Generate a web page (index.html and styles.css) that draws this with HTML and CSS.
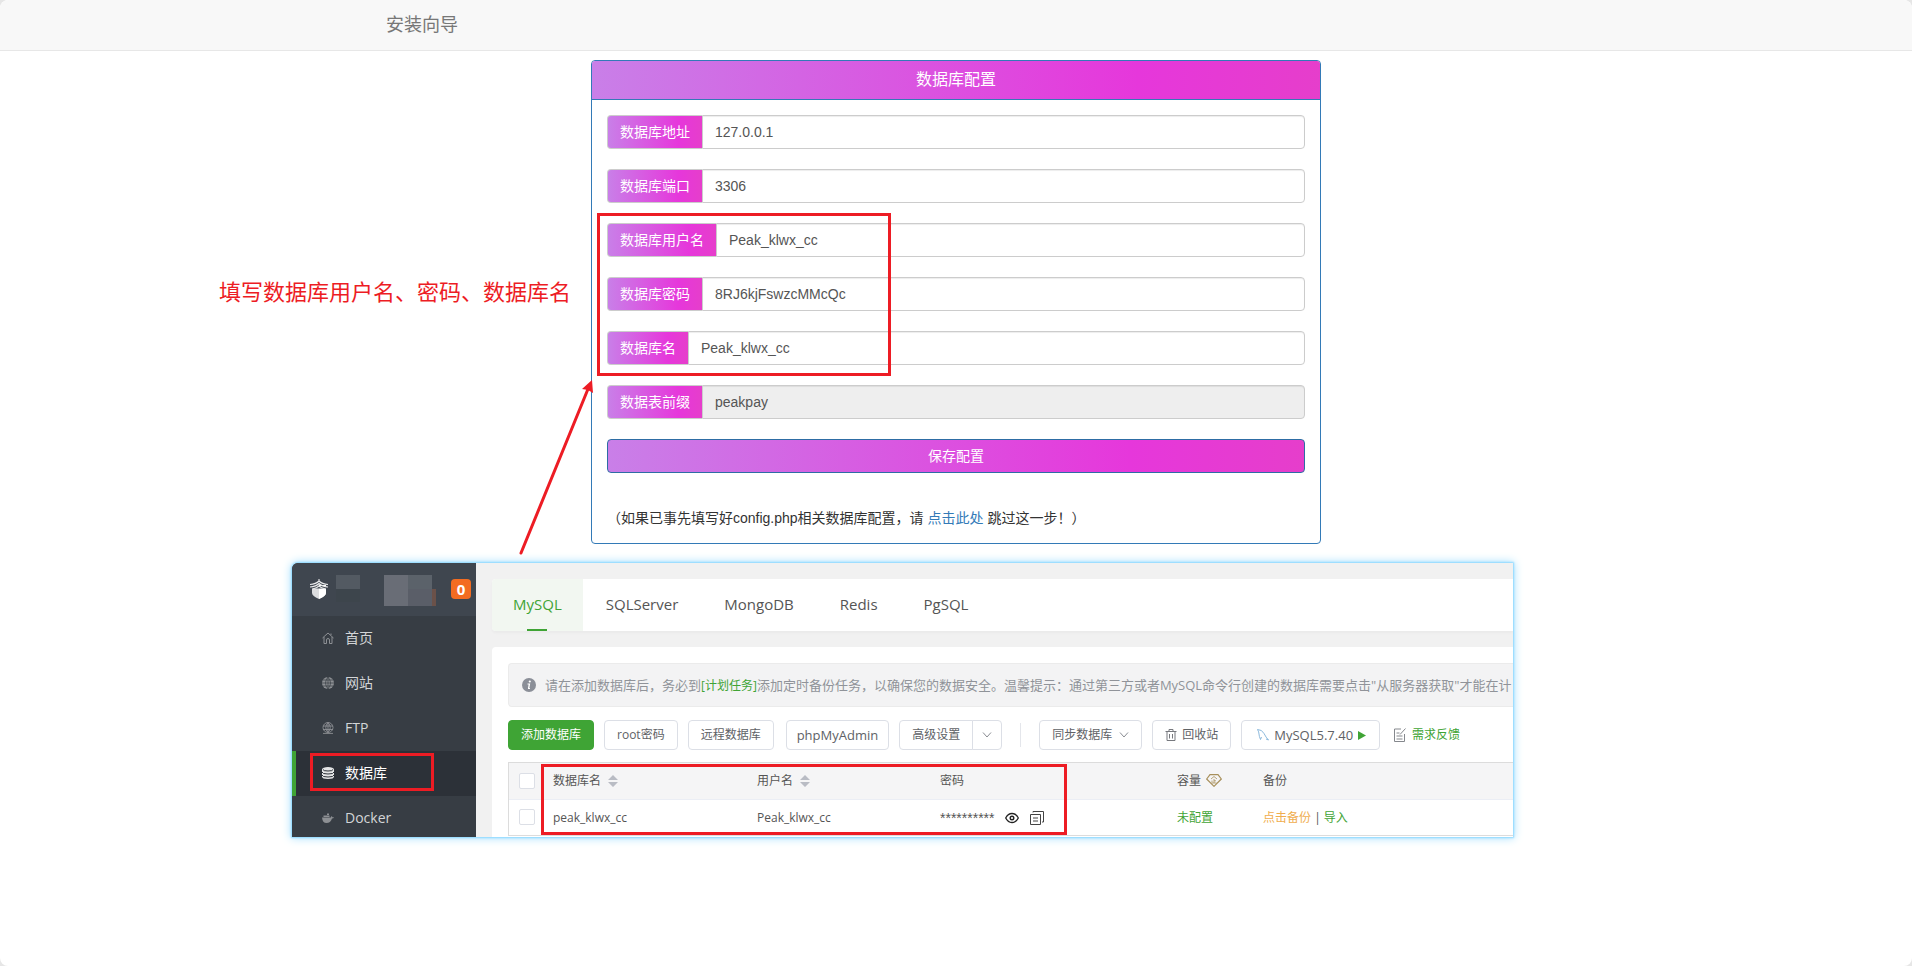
FILE: index.html
```html
<!DOCTYPE html>
<html lang="zh-CN">
<head>
<meta charset="utf-8">
<title>安装向导</title>
<link rel="stylesheet" href="styles.css">
</head>
<body>
<svg class="defs" aria-hidden="true">
  <symbol id="sort" viewBox="0 0 10 12"><path d="M5 0l5 5H0zM5 12L0 7h10z" fill="#b9bcc4"/></symbol>
  <symbol id="chev" viewBox="0 0 10 6"><path d="M1 .5l4 4.500 4-4.500" fill="none" stroke="#8a8d93"/></symbol>
</svg>
<nav class="navbar"><span class="brand">安装向导</span></nav>
<main>
  <div class="guide">
    <form class="panel">
      <h1 class="panel-title">数据库配置</h1>
      <div class="panel-body">
        <div class="group"><label for="host">数据库地址</label><input id="host" value="127.0.0.1"></div>
        <div class="group"><label for="port">数据库端口</label><input id="port" value="3306"></div>
        <div class="group"><label for="user">数据库用户名</label><input id="user" value="Peak_klwx_cc"></div>
        <div class="group"><label for="pwd">数据库密码</label><input id="pwd" value="8RJ6kjFswzcMMcQc"></div>
        <div class="group"><label for="name">数据库名</label><input id="name" value="Peak_klwx_cc"></div>
        <div class="group"><label for="prefix">数据表前缀</label><input id="prefix" value="peakpay" disabled></div>
        <button type="button" class="save">保存配置</button>
        <p class="skip">（如果已事先填写好config.php相关数据库配置，请 <a href="#">点击此处</a> 跳过这一步！）</p>
      </div>
    </form>
    <p class="note">填写数据库用户名、密码、数据库名</p>
    <span class="mark mark-form"></span>
    <svg class="arrow" width="80" height="180" viewBox="0 0 80 180" aria-hidden="true">
      <path d="M6 173L73 9" stroke="#ed1c24" stroke-width="3" stroke-linecap="round"/>
      <path d="M77 0L78 13L73 10L67 9z" fill="#ed1c24"/>
    </svg>
  </div>

  <section class="console">
    <aside class="side">
      <div class="side-head">
        <svg class="logo" width="20" height="20" viewBox="0 0 20 20"><path d="M3 7v7q0 3 7 6 7-3 7-6V7z" fill="#dcdddf"/><path d="M10 6h7v8q0 3-7 6z" fill="#fff"/><path d="M3 10V7h14v3l-1-1-1 1-1-1-1 1-1-1-1 1-1-1-1 1-1-1-1 1-1-1-1 1-1-1z" fill="#3f464f"/><path d="M1 5.500Q7 5 10 2q3 3 9 3.500M1 8Q7 7.500 10 4.500q3 3 9 3.500M3.500 10Q8 9 10 7q2 2 6.500 3M10 0v3" fill="none" stroke="#e9eaeb" stroke-width="1.100"/></svg>
        <svg class="mosaic" width="100" height="32" viewBox="0 0 100 32" aria-hidden="true"><path d="M0 1h24v14H0z" fill="#535a62"/><path d="M0 15h24v13H0z" fill="#3d454c"/><path d="M48 1h24v31H48z" fill="#696d76"/><path d="M72 1h24v14H72z" fill="#5b626a"/><path d="M72 15h24v17H72z" fill="#5a5e68"/><path d="M96 15h4v17h-4z" fill="#6b5149"/></svg>
        <span class="count">0</span>
      </div>
      <a class="item" href="#"><svg width="12" height="12" viewBox="0 0 12 12" fill="none" stroke="#8d9094"><path d="M.5 6L6 1l5.500 5M2 5v6.500h2.500V8a1.500 1.500 0 013 0v3.500H10V5M9 3V1.500"/></svg>首页</a>
      <a class="item" href="#"><svg width="12" height="12" viewBox="0 0 12 12"><circle cx="6" cy="6" r="6" fill="#8d9094"/><path d="M0 6h12M1 3h10M1 9h10M6 0v12M6 0Q1 6 6 12M6 0q5 6 0 12" fill="none" stroke="#373d44" stroke-width=".7"/></svg>网站</a>
      <a class="item" href="#"><svg width="12" height="12" viewBox="0 0 12 12" fill="none" stroke="#8d9094" stroke-width=".9"><circle cx="6" cy="5.500" r="5"/><path d="M1 4h10M1 7.500h10M6 .5v10M6 .5Q1.500 5.500 6 10.500M6 .5q4.500 5 0 10M1 11.400h10"/></svg>FTP</a>
      <a class="item on" href="#"><svg width="12" height="12" viewBox="0 0 12 12"><path d="M0 2.500v7q0 2.500 6 2.500t6-2.500v-7z" fill="#e4e5e6"/><ellipse cx="6" cy="2.500" rx="6" ry="2.500" fill="#e4e5e6"/><path d="M1 2.500q0 1.500 5 1.500t5-1.500M0 5q0 2 6 2t6-2M0 8q0 2 6 2t6-2" fill="none" stroke="#2c3138"/></svg>数据库<span class="mark mark-item"></span></a>
      <a class="item" href="#"><svg width="12" height="12" viewBox="0 0 12 12"><path d="M0 5.500h9q0-1 .5-1.500.8.600.8 1.200h1.700q-.5 1.300-2 1.300Q8.500 11 4.500 11 .5 11 0 5.500M1.500 3.500h6V5h-6zM5 1.500h2V3H5z" fill="#8d9094"/></svg>Docker</a>
    </aside>
    <div class="work">
      <div class="tabs">
        <a class="tab on" href="#">MySQL</a><a class="tab" href="#">SQLServer</a><a class="tab" href="#">MongoDB</a><a class="tab" href="#">Redis</a><a class="tab" href="#">PgSQL</a>
      </div>
      <div class="card">
        <div class="tip"><svg width="14" height="14" viewBox="0 0 14 14"><circle cx="7" cy="7" r="7" fill="#8b8f98"/><circle cx="7.800" cy="3.500" r="1.100" fill="#fff"/><path d="M5.500 6h2L6.700 10.500H8M7.300 6.200L6.500 10.500" fill="none" stroke="#fff" stroke-width="1.200"/></svg><span>请在添加数据库后，务必到<a href="#">[计划任务]</a>添加定时备份任务，以确保您的数据安全。温馨提示：通过第三方或者MySQL命令行创建的数据库需要点击"从服务器获取"才能在计</span></div>
        <div class="tools">
          <button class="btn primary">添加数据库</button>
          <button class="btn">root密码</button>
          <button class="btn">远程数据库</button>
          <button class="btn pma">phpMyAdmin</button>
          <span class="split"><button class="btn">高级设置</button><button class="btn more" aria-label="更多"><svg width="10" height="6"><use href="#chev"/></svg></button></span>
          <i class="rule"></i>
          <button class="btn sync">同步数据库<svg width="10" height="6"><use href="#chev"/></svg></button>
          <button class="btn"><svg width="12" height="12" viewBox="0 0 12 12" fill="none" stroke="#77797e"><path d="M.5 2.500h11M4 2V.5h4V2M2 3v8.500h8V3M4.500 5v4.500M7.500 5v4.500"/></svg>回收站</button>
          <button class="btn ver"><svg width="12" height="12" viewBox="0 0 12 12" fill="none" stroke="#7fb1d8" stroke-width=".9"><path d="M.5.5Q5 .5 7 4.500t4.500 6.500L9 10M.5.5Q2 3 2 5t1.500 5.500L4.500 8"/></svg>MySQL5.7.40<svg width="8" height="9" viewBox="0 0 8 9"><path d="M0 0l8 4.500L0 9z" fill="#3fa435"/></svg></button>
          <a class="feedback" href="#"><svg width="12" height="14" viewBox="0 0 12 14" fill="none" stroke="#85888d"><path d="M7 1H.5v12.500h10V6M2.500 5h3M2.500 8h6M2.500 11h6M6 6.500L11.500.5"/></svg>需求反馈</a>
        </div>
        <div class="table-wrap">
          <table>
            <colgroup><col class="c-check"><col class="c-name"><col class="c-user"><col class="c-pass"><col class="c-size"><col></colgroup>
            <thead><tr><th><input type="checkbox" aria-label="全选"></th><th>数据库名<svg class="sort" width="10" height="12"><use href="#sort"/></svg></th><th>用户名<svg class="sort" width="10" height="12"><use href="#sort"/></svg></th><th>密码</th><th>容量<svg class="gem" width="16" height="13" viewBox="0 0 16 13" fill="none" stroke="#a8905b"><path d="M4 .7h8L15.300 5 8 12.300.7 5z" stroke-width="1.200"/><path d="M5 5l3-2.500L11 5M8 5v4M5.500 9h5M6 6.500v2M8 6.800h2" stroke-width=".8"/></svg></th><th>备份</th></tr></thead>
            <tbody><tr><td><input type="checkbox" aria-label="选择 peak_klwx_cc"></td><td>peak_klwx_cc</td><td>Peak_klwx_cc</td><td><span class="secret"><span class="stars">**********</span><svg width="14" height="12" viewBox="0 0 14 12" fill="none" stroke="#222"><path d="M.7 6Q3 1.500 7 1.500T13.300 6Q11 10.500 7 10.500T.7 6z" stroke-width="1.300"/><circle cx="7" cy="6" r="1.800" stroke-width="1.400"/></svg><svg width="14" height="14" viewBox="0 0 14 14" fill="none" stroke="#444"><path d="M.5 3.500h10v10H.5zM3 1.500V.5h10.500V11H12M3 7h5M3 10h5"/></svg></span></td><td><a class="ok" href="#">未配置</a></td><td><a class="warn" href="#">点击备份</a> | <a class="ok" href="#">导入</a></td></tr></tbody>
          </table>
          <span class="mark mark-table"></span>
        </div>
      </div>
    </div>
  </section>
</main>
</body>
</html>
```
FILE: styles.css
```css
* { box-sizing: border-box; }
html { background: #e6e6e6; }
body {
  min-height: 100vh;
  margin: 0;
  border-radius: 8px;
  background: #fff;
  color: #333;
  font: 14px/20px "Liberation Sans", "Noto Sans CJK SC", sans-serif;
}
a { color: #337ab7; text-decoration: none; }
svg { flex: none; }
input, button { font: inherit; }
.defs { display: none; }

.navbar { height: 51px; border-bottom: 1px solid #e7e7e7; border-radius: 8px 8px 0 0; background: #f8f8f8; }
.brand { display: block; max-width: 1140px; margin: 0 auto; padding: 15px 0; font-size: 18px; color: #777; }

.guide { position: relative; width: 730px; margin: 9px auto 0; }
.panel { border: 1px solid #337ab7; border-radius: 4px; background: #fff; }
.panel-title, .group label, .save {
  background: linear-gradient(to right, #c97fe8, #e637db 75%, #e63ecb);
  color: #fff;
}
.panel-title {
  margin: 0;
  padding: 10px 15px;
  border-bottom: 1px solid #337ab7;
  border-radius: 3px 3px 0 0;
  font-size: 16px;
  line-height: 18px;
  font-weight: 400;
  text-align: center;
}
.panel-body { padding: 15px; }
.group { display: flex; height: 34px; margin-bottom: 20px; }
.group label {
  padding: 6px 12px;
  border: 1px solid #ccc;
  border-right: 0;
  border-radius: 4px 0 0 4px;
}
.group input {
  flex: 1;
  min-width: 0;
  padding: 6px 12px;
  border: 1px solid #ccc;
  border-radius: 0 4px 4px 0;
  background: #fff;
  color: #555;
  box-shadow: inset 0 1px 1px rgba(0, 0, 0, .075);
}
.group input:disabled { background: #eee; }
.save { display: block; width: 100%; height: 34px; border: 1px solid #2e6da4; border-radius: 4px; padding: 0; }
.skip { margin: 35px 0 0; }

.mark { position: absolute; border: 3px solid #ed1c24; pointer-events: none; }
.mark-form { left: 6px; top: 153px; width: 294px; height: 163px; }
.note { position: absolute; right: 750px; top: 218px; margin: 0; font-size: 22px; line-height: 30px; color: #ed1c24; white-space: nowrap; }
.arrow { position: absolute; left: -76px; top: 320px; }

.console {
  display: flex;
  height: 274px;
  margin: 19px 399px 0 292px;
  overflow: hidden;
  border-radius: 6px 0 0 0;
  background: #f1f1f1;
  color: #555;
  font: 12px/20px "Open Sans", "Noto Sans CJK SC", sans-serif;
  box-shadow: 0 0 2px 1px #8ed8ff, 0 0 10px 1px #a5e0ff;
}
.side { flex: none; width: 184px; background: #373d44; }
.side-head { display: flex; height: 53px; padding: 11px 5px 0 17px; background: #3f464f; }
.logo { margin: 5px 7px 0 0; }
.mosaic { margin-right: auto; }
.count { width: 20px; height: 20px; margin-top: 5px; border-radius: 4px; background: #f36c21; color: #fff; font-size: 15px; font-weight: 700; text-align: center; }
.item { position: relative; display: flex; align-items: center; gap: 11px; height: 45px; padding: 0 0 2px 30px; color: #d3d5d7; font-size: 14px; }
.item.on { background: #2c3138; color: #fff; box-shadow: inset 4px 0 #3fa435; }
.mark-item { left: 18px; top: 2px; width: 124px; height: 38px; }

.work { flex: 1; min-width: 0; padding: 16px 0 0 16px; }
.tabs { display: flex; height: 52px; border-radius: 4px 0 0 4px; background: #fff; box-shadow: 0 2px 3px rgba(0, 0, 0, .03); }
.tab { padding: 15px 23px 0; color: #555; font-size: 15px; }
.tab.on {
  padding: 15px 21px 0;
  border-radius: 4px 0 0 4px;
  background: linear-gradient(#3fa435, #3fa435) 50% 100% / 20px 2px no-repeat #f2f7f1;
  color: #3fa435;
}
.card { height: 200px; margin-top: 16px; padding: 16px 0 0 16px; border-radius: 4px 0 0 0; background: #fff; }
.tip { display: flex; align-items: center; gap: 9px; height: 44px; padding-left: 13px; border: 1px solid #ebebeb; border-right: 0; border-radius: 4px 0 0 4px; background: #f3f3f4; color: #909399; font-size: 13px; white-space: nowrap; }
.tip a { color: #3fa435; font-size: 12px; }
.tools { display: flex; align-items: center; gap: 10px; margin: 13px 0 12px; white-space: nowrap; }
.btn { display: flex; align-items: center; justify-content: center; gap: 5px; height: 30px; padding: 0 12px; border: 1px solid #dcdfe6; border-radius: 4px; background: #fff; color: #606266; }
.btn.primary { border-color: #3fa435; background: #3fa435; color: #fff; }
.btn.pma { margin-left: 2px; padding: 0 10px; font-size: 13px; }
.btn.sync { gap: 7px; }
.btn.ver { padding: 0 13px 0 15px; font-size: 13px; }
.split { display: flex; }
.split .btn { border-radius: 4px 0 0 4px; }
.split .more { width: 30px; padding: 0; margin-left: -1px; border-radius: 0 4px 4px 0; }
.rule { width: 1px; height: 24px; margin: 0 8px; background: #e4e6eb; }
.feedback { display: flex; align-items: center; gap: 6px; padding-left: 4px; color: #3fa435; }

.table-wrap { position: relative; border: 1px solid #dcdcdc; border-right: 0; }
table { width: 100%; table-layout: fixed; border-collapse: collapse; }
.c-check { width: 35px; }
.c-name { width: 204px; }
.c-user { width: 183px; }
.c-pass { width: 237px; }
.c-size { width: 86px; }
th, td { height: 36px; padding: 0 0 0 9px; font-weight: 400; text-align: left; white-space: nowrap; }
td { padding-top: 2px; }
th { background: #f5f5f6; border-bottom: 1px solid #ebeef5; }
th:first-child, td:first-child { padding: 0 0 0 10px; }
table input { display: block; appearance: none; width: 16px; height: 16px; margin: 0; border: 1px solid #dcdfe6; border-radius: 2px; background: #fff; }
.sort { margin-left: 7px; vertical-align: -2px; }
.gem { margin-left: 5px; vertical-align: -2px; }
.secret { display: flex; align-items: center; gap: 11px; }
.stars { font-family: "Liberation Sans", sans-serif; font-size: 14px; }
.ok { color: #3fa435; }
.warn { color: #f0ad4e; }
.mark-table { left: 32px; top: 1px; width: 526px; height: 71px; }
```
